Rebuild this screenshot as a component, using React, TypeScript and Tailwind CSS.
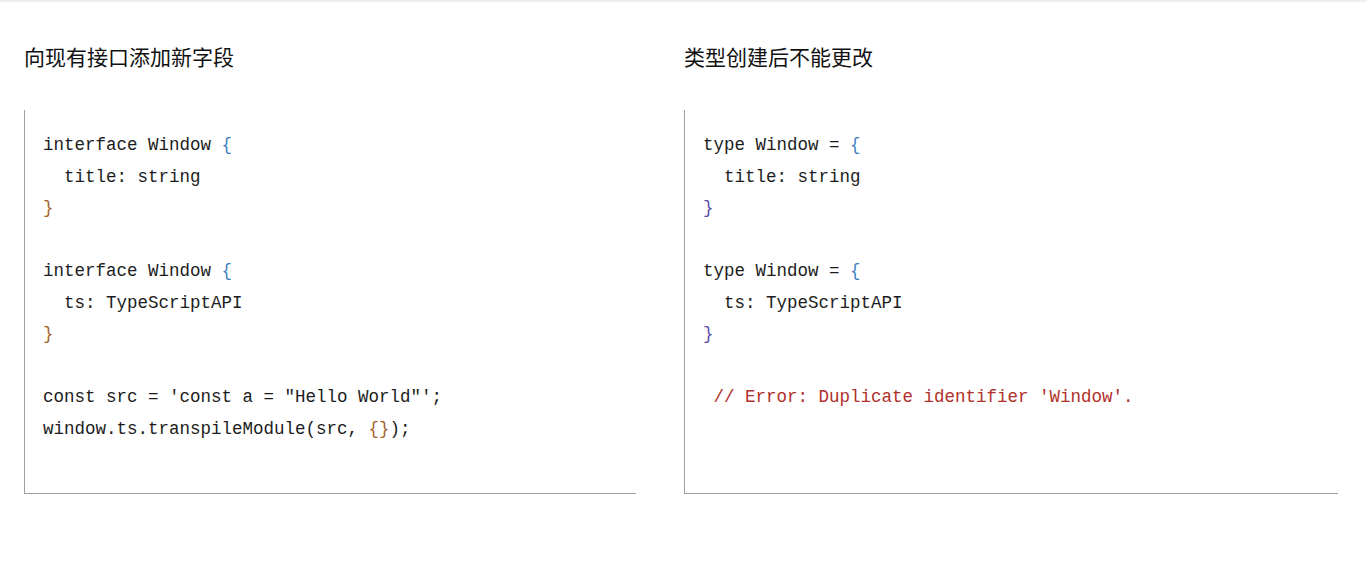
const mono = "font-['Liberation_Mono','Noto_Sans_CJK_SC',monospace]";

function Open() {
  return <span className="text-[#3d7fc1]">{"{"}</span>;
}

function Close({ tone }: { tone: "brown" | "purple" }) {
  return (
    <span className={tone === "brown" ? "text-[#a5622a]" : "text-[#5a4aa8]"}>
      {"}"}
    </span>
  );
}

function CodeBox({ children }: { children: React.ReactNode }) {
  return (
    <div className="h-[384px] border-l border-b border-[#9e9e9e] pl-[18px] pt-[20px]">
      <pre className={`${mono} text-[17.5px] leading-[31.5px] text-[#1c1c1c]`}>
        {children}
      </pre>
    </div>
  );
}

export default function App() {
  return (
    <div className="min-h-screen bg-white border-t-2 border-[#eeeeee] font-['Noto_Sans_CJK_SC',sans-serif]">
      <div className="flex gap-12 px-6 pt-[38px]">
        <section className="w-[612px]">
          <h2 className="text-[21px] leading-[32px] text-[#111]">向现有接口添加新字段</h2>
          <div className="mt-[38px]">
            <CodeBox>
              {"interface Window "}<Open />{"\n"}
              {"  title: string\n"}
              <Close tone="brown" />{"\n\n"}
              {"interface Window "}<Open />{"\n"}
              {"  ts: TypeScriptAPI\n"}
              <Close tone="brown" />{"\n\n"}
              {"const src = 'const a = \"Hello World\"';\n"}
              {"window.ts.transpileModule(src, "}
              <span className="text-[#a5622a]">{"{}"}</span>
              {");"}
            </CodeBox>
          </div>
        </section>
        <section className="w-[654px]">
          <h2 className="text-[21px] leading-[32px] text-[#111]">类型创建后不能更改</h2>
          <div className="mt-[38px]">
            <CodeBox>
              {"type Window = "}<Open />{"\n"}
              {"  title: string\n"}
              <Close tone="purple" />{"\n\n"}
              {"type Window = "}<Open />{"\n"}
              {"  ts: TypeScriptAPI\n"}
              <Close tone="purple" />{"\n\n"}
              <span className="text-[#b0302c]">{" // Error: Duplicate identifier 'Window'."}</span>
            </CodeBox>
          </div>
        </section>
      </div>
    </div>
  );
}
